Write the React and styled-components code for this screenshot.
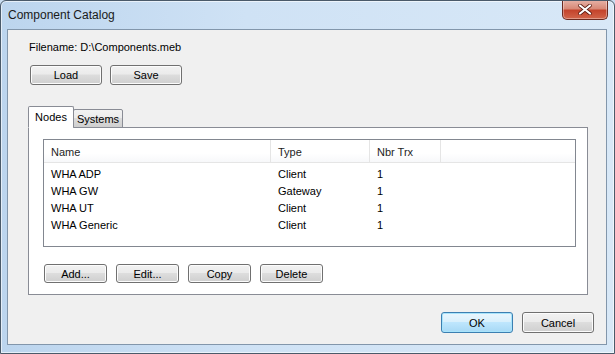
import React from "react";
import styled, { createGlobalStyle } from "styled-components";

const UI_FONT = `"Liberation Sans", Arial, sans-serif`;

const Global = createGlobalStyle`
  html, body { margin: 0; padding: 0; background: #c9ddf1; }
  body { font-family: ${UI_FONT}; font-size: 11px; color: #000; }
  * { box-sizing: border-box; }
`;

const Window = styled.div`
  width: 615px;
  height: 354px;
  display: flex;
  flex-direction: column;
  border: 1px solid #4a5a6a;
  border-radius: 6px 6px 0 0;
  background: linear-gradient(90deg, #bcd5ee 0%, #cfe2f5 40%, #d8e8f7 100%);
  box-shadow: inset 0 0 0 1px rgba(255,255,255,0.6);
  overflow: hidden;
`;

const TitleBar = styled.div`
  height: 28px;
  display: flex;
  justify-content: space-between;
  align-items: flex-start;
  padding-left: 7px;
  padding-right: 6px;
`;

const Title = styled.span`
  font-family: ${UI_FONT};
  font-size: 12px;
  line-height: 28px;
  color: #1a1a1a;
`;

const CloseButton = styled.div`
  width: 46px;
  height: 20px;
  margin-top: -1px;
  border: 1px solid #6c2a20;
  border-top: none;
  border-radius: 0 0 5px 5px;
  background: linear-gradient(180deg, #e7b3a8 0%, #d88a78 45%, #c4442c 55%, #d2654a 100%);
  box-shadow: inset 0 0 0 1px rgba(255,255,255,0.35);
  display: flex;
  align-items: center;
  justify-content: center;
`;

const Client = styled.div`
  flex: 1;
  margin: 0 7px 8px 6px;
  border: 1px solid #8296ab;
  background: #f0f0f0;
  display: flex;
  flex-direction: column;
  padding: 11px 0 0 0;
`;

const FileLabel = styled.div`
  padding-left: 21px;
  line-height: 13px;
  font-size: 11px;
`;

const Row = styled.div`
  display: flex;
  gap: ${p => p.$gap || 8}px;
  padding-left: ${p => p.$left || 0}px;
  margin-top: ${p => p.$top || 0}px;
  justify-content: ${p => (p.$end ? "flex-end" : "flex-start")};
  padding-right: ${p => p.$right || 0}px;
`;

const Button = styled.button`
  width: ${p => p.$w || 72}px;
  height: ${p => p.$h || 20}px;
  padding: 0;
  border: 1px solid ${p => (p.$default ? "#3c7fb1" : "#707070")};
  border-radius: 3px;
  background: ${p =>
    p.$default
      ? "linear-gradient(180deg, #eaf6fd 0%, #d9f0fc 45%, #bee6fd 50%, #a7d9f5 100%)"
      : "linear-gradient(180deg, #f2f2f2 0%, #ebebeb 45%, #dddddd 50%, #cfcfcf 100%)"};
  box-shadow: inset 0 0 0 1px ${p => (p.$default ? "#a8e4fb" : "#fcfcfc")};
  font-family: ${UI_FONT};
  font-size: 11px;
  color: #000;
`;

const Tabs = styled.div`
  margin: 21px 18px 0 20px;
  display: flex;
  flex-direction: column;
`;

const TabStrip = styled.div`
  display: flex;
  align-items: flex-end;
  height: 22px;
  position: relative;
  z-index: 1;
  margin-bottom: -1px;
`;

const Tab = styled.div`
  height: ${p => (p.$active ? 22 : 19)}px;
  width: ${p => p.$w}px;
  justify-content: center;
  border: 1px solid #898c95;
  border-bottom: ${p => (p.$active ? "1px solid #fff" : "1px solid #898c95")};
  border-radius: 2px 2px 0 0;
  margin-left: ${p => (p.$active ? 0 : -1)}px;
  background: ${p => (p.$active ? "#fff" : "linear-gradient(180deg, #f2f2f2 0%, #ebebeb 50%, #dcdcdc 50%, #cfcfcf 100%)")};
  display: flex;
  align-items: center;
  font-size: 11px;
`;

const Panel = styled.div`
  height: 168px;
  background: #fff;
  border: 1px solid #898c95;
  display: flex;
  flex-direction: column;
  padding: 11px 11px 0 14px;
`;

const List = styled.div`
  height: 108px;
  border: 1px solid #828790;
  background: #fff;
  display: flex;
  flex-direction: column;
`;

const Header = styled.div`
  display: grid;
  grid-template-columns: 227px 99px 71px 1fr;
  height: 23px;
  border-bottom: 1px solid #e5e5e5;
  background: linear-gradient(180deg, #fff 0%, #fff 60%, #f7f8fa 100%);
`;

const HeadCell = styled.div`
  padding-left: 7px;
  display: flex;
  align-items: center;
  padding-top: 2px;
  border-right: ${p => (p.$last ? "none" : "1px solid #e5e5e5")};
  font-size: 11px;
  color: #1e1e1e;
`;

const Body = styled.div`
  padding-top: 2px;
`;

const DataRow = styled.div`
  display: grid;
  grid-template-columns: 227px 99px 71px 1fr;
  height: 17px;
  align-items: center;
`;

const Cell = styled.div`
  padding-left: 7px;
  font-size: 11px;
  white-space: nowrap;
`;

const rows = [
  ["WHA ADP", "Client", "1"],
  ["WHA GW", "Gateway", "1"],
  ["WHA UT", "Client", "1"],
  ["WHA Generic", "Client", "1"],
];

export default function App() {
  return (
    <>
      <Global />
      <Window>
        <TitleBar>
          <Title>Component Catalog</Title>
          <CloseButton>
            <svg width="14" height="11" viewBox="0 0 14 11">
              <path d="M2 1.5 L12 9.5 M12 1.5 L2 9.5" stroke="#5a1a10" strokeWidth="3.6" strokeLinecap="round" />
              <path d="M2 1.5 L12 9.5 M12 1.5 L2 9.5" stroke="#fff" strokeWidth="2.2" strokeLinecap="round" />
            </svg>
          </CloseButton>
        </TitleBar>
        <Client>
          <FileLabel>Filename: D:\Components.meb</FileLabel>
          <Row $left={22} $top={11} $gap={8}>
            <Button>Load</Button>
            <Button>Save</Button>
          </Row>
          <Tabs>
            <TabStrip>
              <Tab $active $w={46}>Nodes</Tab>
              <Tab $w={50}>Systems</Tab>
            </TabStrip>
            <Panel>
              <List>
                <Header>
                  <HeadCell>Name</HeadCell>
                  <HeadCell>Type</HeadCell>
                  <HeadCell>Nbr Trx</HeadCell>
                  <HeadCell $last />
                </Header>
                <Body>
                  {rows.map(r => (
                    <DataRow key={r[0]}>
                      <Cell>{r[0]}</Cell>
                      <Cell>{r[1]}</Cell>
                      <Cell>{r[2]}</Cell>
                      <Cell />
                    </DataRow>
                  ))}
                </Body>
              </List>
              <Row $top={17} $gap={9} $left={1}>
                <Button $w={63} $h={19}>Add...</Button>
                <Button $w={63} $h={19}>Edit...</Button>
                <Button $w={63} $h={19}>Copy</Button>
                <Button $w={63} $h={19}>Delete</Button>
              </Row>
            </Panel>
          </Tabs>
          <Row $top={17} $gap={9} $end $right={12}>
            <Button $default $h={21}>OK</Button>
            <Button $h={21}>Cancel</Button>
          </Row>
        </Client>
      </Window>
    </>
  );
}
